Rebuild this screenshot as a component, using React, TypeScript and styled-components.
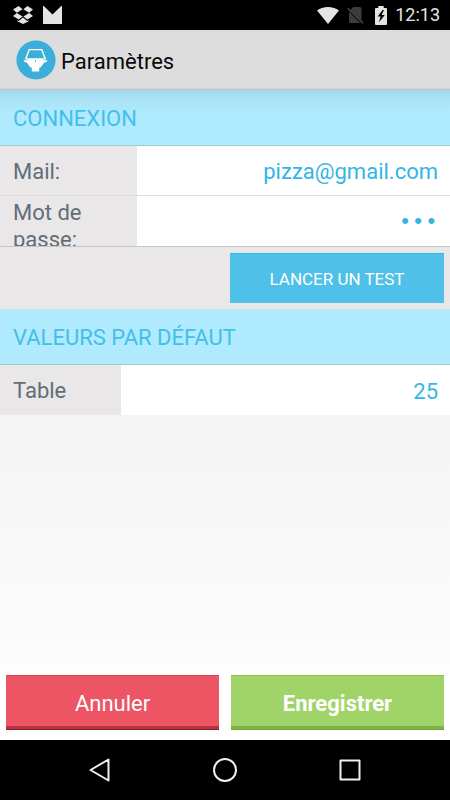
import React from "react";
import styled, { createGlobalStyle } from "styled-components";

const GlobalStyle = createGlobalStyle`
  *, *::before, *::after { box-sizing: border-box; }
  body { margin: 0; background: #fff; font-family: Roboto, "Noto Sans", sans-serif; }
  button, input { font-family: inherit; }
`;

const Screen = styled.div`
  display: flex;
  flex-direction: column;
  min-height: 100vh;
`;

const StatusBar = styled.div`
  display: flex;
  align-items: center;
  justify-content: space-between;
  height: 30px;
  padding: 0 10px 0 13px;
  background: #000;
  color: #e4e4e4;
`;

const StatusGroup = styled.div<{ $gap: number }>`
  display: flex;
  align-items: center;
  gap: ${(p) => p.$gap}px;
`;

const Clock = styled.time`
  font-size: 18px;
  line-height: 30px;
  font-weight: 400;
`;

const AppBar = styled.header`
  display: flex;
  align-items: center;
  gap: 5px;
  height: 60px;
  padding: 1px 16px 0;
  background: #ddd;
  border-bottom: 1px solid #c6c6c6;
  box-shadow: inset 0 -1px #d2d2d2;
`;

const Title = styled.h1`
  margin: 0;
  padding-top: 3px;
  font-size: 22px;
  line-height: 28px;
  font-weight: 400;
  color: #0a0a0a;
`;

const Content = styled.main`
  flex: 1;
  display: flex;
  flex-direction: column;
  background: linear-gradient(#f3f3f3 50%, #fcfcfc);
`;

const SectionTitle = styled.h2<{ $shaded?: boolean }>`
  margin: 0;
  padding: 3px 13px 0;
  font-size: 22px;
  line-height: 52px;
  font-weight: 400;
  color: #45bfe8;
  background: ${(p) =>
    p.$shaded ? "linear-gradient(#9fd9e9, #a9e3f5 10px, #afeaff 24px)" : "#afeaff"};
  border-bottom: 1px solid #9fcbd8;
`;

const Row = styled.div`
  display: flex;
  height: 50px;
  background: #fff;
`;

const MailRow = styled(Row)`
  border-bottom: 1px solid #dedede;
`;

const PasswordRow = styled(Row)`
  height: 51px;
  border-bottom: 1px solid #c6c6c6;
`;

const Label = styled.label<{ $width: number }>`
  flex: none;
  width: ${(p) => p.$width}px;
  padding: 3px 13px 0;
  overflow: hidden;
  font-size: 22px;
  line-height: 27px;
  color: #626d78;
  background: #e9e7e8;
`;

const SingleLabel = styled(Label)`
  padding-top: 12px;
`;

const Field = styled.input`
  flex: 1;
  min-width: 0;
  padding: 2px 12px 0;
  border: 0;
  outline: 0;
  background: transparent;
  font-size: 22px;
  text-align: right;
  color: #33b5e5;
`;

const PasswordField = styled(Field)`
  font-family: "Liberation Mono", monospace;
`;

const Actions = styled.div`
  display: flex;
  justify-content: flex-end;
  padding: 6px;
  background: #e9e7e8;
`;

const TestButton = styled.button`
  width: 214px;
  height: 50px;
  padding: 0;
  border: 0;
  border-top: 1px solid #33b5e5;
  font-size: 17px;
  color: #fff;
  background: #4fc1e9;
`;

const Footer = styled.footer`
  display: flex;
  gap: 12px;
  padding: 10px 6px;
  background: #fff;
`;

const tones = {
  cancel: { fill: "#ed5565", top: "#da4453", side: "#b13543", bottom: "#a01424", weight: 400 },
  save: { fill: "#a0d468", top: "#8cc152", side: "#7fb347", bottom: "#6fa52f", weight: 700 },
};

const FooterButton = styled.button<{ $tone: keyof typeof tones }>`
  flex: 1;
  height: 55px;
  padding: 6px 0 4px;
  border: 0;
  font-size: 22px;
  font-weight: ${(p) => tones[p.$tone].weight};
  color: #fff;
  background: ${(p) => tones[p.$tone].fill};
  box-shadow:
    inset 0 1px ${(p) => tones[p.$tone].top},
    inset 0 -1px ${(p) => tones[p.$tone].bottom},
    inset 0 -4px ${(p) => tones[p.$tone].side};
`;

const NavBar = styled.nav`
  display: flex;
  justify-content: center;
  align-items: center;
  gap: 85px;
  height: 60px;
  background: #000;
`;

const NavButton = styled.button`
  display: flex;
  width: 40px;
  height: 40px;
  padding: 7px;
  border: 0;
  background: none;
  color: #f0f0f0;
`;

const DropboxIcon = () => (
  <svg width="20" height="18" viewBox="0 0 20 18" fill="currentColor" aria-hidden="true">
    <path d="M5.6 0 0 3.6l3.9 3.1L9.6 3.2zM14.4 0 20 3.6l-3.9 3.1-5.7-3.5zM0 10.1l3.9-3.2 5.7 3.5-4 3.2zM20 10.1l-3.9-3.2-5.7 3.5 4 3.2zM4.3 14.2l1.4.9L10 11.5l4.3 3.6 1.4-.9v1L10 18l-5.7-2.8z" />
  </svg>
);

const MailIcon = () => (
  <svg width="19" height="18" viewBox="0 0 19 18" fill="currentColor" aria-hidden="true">
    <path d="M0 0h.8L9.5 8.6 18.2 0h.8v18H0z" />
  </svg>
);

const WifiIcon = () => (
  <svg width="22" height="17" viewBox="0 0 22 17" fill="currentColor" aria-hidden="true">
    <path d="M11 17 0 3.5C3 1.2 6.8 0 11 0s8 1.2 11 3.5z" />
  </svg>
);

const NoSimIcon = () => (
  <svg width="17" height="18" viewBox="0 0 17 18" aria-hidden="true">
    <path d="M6.2 1H13q1.5 0 1.5 1.5v12.3L3.5 3.7zM2 5.6 13.4 17H3.5Q2 17 2 15.5z" fill="#3c3c3c" />
    <path d="m.8 2.2 15.2 15" stroke="#4a4a4a" strokeWidth="1.5" />
  </svg>
);

const BatteryIcon = () => (
  <svg width="12" height="19" viewBox="0 0 12 19" aria-hidden="true">
    <path d="M3.3 0h5.4v2H11q1 0 1 1v15q0 1-1 1H1q-1 0-1-1V3q0-1 1-1h2.3z" fill="currentColor" />
    <path d="M7.6 4 2.6 10.6h3L4 16.2 9.8 9H6.6L9 4z" fill="#000" />
  </svg>
);

const AppLogo = () => (
  <svg width="40" height="40" viewBox="0 0 40 40" aria-hidden="true">
    <circle cx="20" cy="20" r="19.6" fill="#3bafda" />
    <path d="M13.2 9.6h12.6l3.4 9.3H9.8z" fill="none" stroke="#fff" strokeWidth="1.4" />
    <path
      d="M7.8 20.3h3.4l1.4-1.4h13.8l1.4 1.4h3.4v1.3l-3.2 1.1-3.2 4.5-1.6.6v3.7h-7.4v-3.7l-1.6-.6-3.2-4.5-3.2-1.1z"
      fill="#fff"
    />
    <path d="M19 20.3h1v1.6h-1z" fill="#3bafda" />
  </svg>
);

const iconProps = {
  width: 26,
  height: 26,
  viewBox: "0 0 26 26",
  fill: "none",
  stroke: "currentColor",
  strokeWidth: 2,
  strokeLinejoin: "round" as const,
  "aria-hidden": true,
};

export default function App() {
  return (
    <>
      <GlobalStyle />
      <Screen>
        <StatusBar>
          <StatusGroup $gap={10}>
            <DropboxIcon />
            <MailIcon />
          </StatusGroup>
          <StatusGroup $gap={8}>
            <WifiIcon />
            <StatusGroup $gap={11}>
              <NoSimIcon />
              <BatteryIcon />
            </StatusGroup>
            <Clock>12:13</Clock>
          </StatusGroup>
        </StatusBar>
        <AppBar>
          <AppLogo />
          <Title>Paramètres</Title>
        </AppBar>
        <Content>
          <SectionTitle $shaded>CONNEXION</SectionTitle>
          <MailRow>
            <SingleLabel $width={137} htmlFor="mail">Mail:</SingleLabel>
            <Field id="mail" type="email" defaultValue="pizza@gmail.com" />
          </MailRow>
          <PasswordRow>
            <Label $width={137} htmlFor="password">Mot de passe:</Label>
            <PasswordField id="password" type="password" defaultValue="abc" />
          </PasswordRow>
          <Actions>
            <TestButton type="button">LANCER UN TEST</TestButton>
          </Actions>
          <SectionTitle>VALEURS PAR DÉFAUT</SectionTitle>
          <Row>
            <SingleLabel $width={121} htmlFor="table">Table</SingleLabel>
            <Field id="table" type="text" inputMode="numeric" defaultValue="25" />
          </Row>
        </Content>
        <Footer>
          <FooterButton type="button" $tone="cancel">Annuler</FooterButton>
          <FooterButton type="button" $tone="save">Enregistrer</FooterButton>
        </Footer>
        <NavBar>
          <NavButton type="button" aria-label="Retour">
            <svg {...iconProps}><path d="M3.5 13 21.5 2.5v21z" /></svg>
          </NavButton>
          <NavButton type="button" aria-label="Accueil">
            <svg {...iconProps}><circle cx="13" cy="13" r="11" /></svg>
          </NavButton>
          <NavButton type="button" aria-label="Applications récentes">
            <svg {...iconProps}><path d="M3.5 3.5h19v19h-19z" /></svg>
          </NavButton>
        </NavBar>
      </Screen>
    </>
  );
}
